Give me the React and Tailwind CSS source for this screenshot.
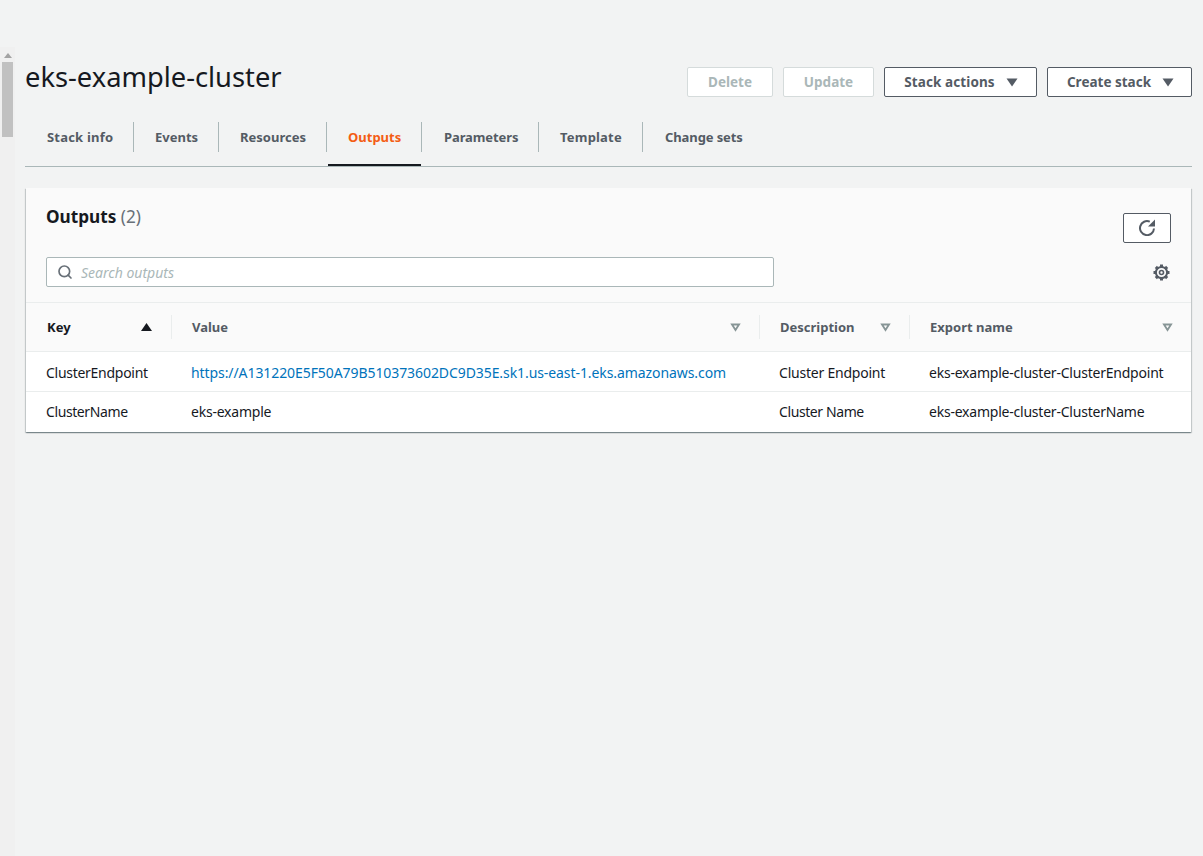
import { Search } from 'lucide-react';

const tabs = [
  { label: 'Stack info', width: 'w-[109px] pl-[22px] tracking-[0.2px]' },
  { label: 'Events', width: 'w-[85px] pl-[21px]' },
  { label: 'Resources', width: 'w-[108px] pl-[21px]' },
  { label: 'Outputs', width: 'w-[95px] pl-[21px]' },
  { label: 'Parameters', width: 'w-[117px] pl-[22px] tracking-[-0.1px]' },
  { label: 'Template', width: 'w-[104px] pl-[21px] tracking-[0.2px]' },
  { label: 'Change sets', width: 'w-[120px] pl-[22px] tracking-[-0.1px]' },
];

const columns = [
  { label: 'Key', width: 'w-[145px] pr-[19px]', sort: true },
  { label: 'Value', width: 'w-[588px] pr-[18px]', filter: true },
  { label: 'Description', width: 'w-[150px] pr-[18px]', filter: true },
  { label: 'Export name', width: 'flex-1 pr-[18px]', filter: true },
];

const rows = [
  {
    key: 'ClusterEndpoint',
    value: 'https://A131220E5F50A79B510373602DC9D35E.sk1.us-east-1.eks.amazonaws.com',
    link: true,
    description: 'Cluster Endpoint',
    exportName: 'eks-example-cluster-ClusterEndpoint',
  },
  {
    key: 'ClusterName',
    value: 'eks-example',
    description: 'Cluster Name',
    exportName: 'eks-example-cluster-ClusterName',
  },
];

const Caret = () => (
  <svg width="12" height="9" viewBox="0 0 12 9" className="ml-[11px]">
    <path d="M0.5 0.5h11L6 8.5z" fill="#545b64" />
  </svg>
);

const FilterCaret = () => (
  <svg width="11" height="9" viewBox="0 0 11 9">
    <path d="M0.3 0.5h10.4L5.5 8.7z M3.7 2.4h3.6L5.5 5.2z" fill="#879596" fillRule="evenodd" />
  </svg>
);

const RefreshIcon = () => (
  <svg width="17" height="17" viewBox="0 0 17 17" fill="none" className="mb-[1px]">
    <path d="M10.8 2.7A7 7 0 1 0 15 9.5" stroke="#545b64" strokeWidth="2" />
    <path d="M16 0.5v7H9z" fill="#545b64" />
  </svg>
);

const GearIcon = () => (
  <svg width="17" height="17" viewBox="0 0 17 17" fill="none" className="mr-[1px]">
    {[0, 45, 90, 135, 180, 225, 270, 315].map((deg) => (
      <rect key={deg} x="7" y="0.5" width="3" height="3" fill="#545b64" transform={`rotate(${deg} 8.5 8.5)`} />
    ))}
    <circle cx="8.5" cy="8.5" r="5.6" stroke="#545b64" strokeWidth="2" />
    <circle cx="8.5" cy="8.5" r="2" stroke="#545b64" strokeWidth="1.6" />
  </svg>
);

const App = () => {
  return (
    <div className="flex min-h-[856px] bg-[#f2f3f3] font-['Noto_Sans',sans-serif] text-[14px] text-[#16191f]">
      {/* Scrollbar */}
      <div className="w-[15px] shrink-0 pt-[47px]">
        <div className="h-[809px] bg-[#f0f0f0] px-[2px]">
          <div className="flex h-[15px] items-center justify-center pt-[1px]">
            <svg width="8" height="5" viewBox="0 0 8 5">
              <path d="M0 5L4 0l4 5z" fill="#a3a3a3" />
            </svg>
          </div>
          <div className="h-[75px] w-[11px] bg-[#c1c1c1]" />
        </div>
      </div>

      <div className="min-w-0 flex-1 pl-[10px] pr-[11px] pt-[57px]">
        {/* Header */}
        <div className="flex h-[40px] items-start justify-between">
          <h1 className="text-[27.3px] leading-[40px] font-normal">eks-example-cluster</h1>
          <div className="mt-[10px] flex gap-[10px] text-[13.5px]">
            <button className="h-[30px] w-[86px] rounded-[2px] border border-[#d5dbdb] bg-white font-bold text-[#aab7b8]">Delete</button>
            <button className="h-[30px] w-[91px] rounded-[2px] border border-[#d5dbdb] bg-white font-bold text-[#aab7b8]">Update</button>
            <button className="flex h-[30px] w-[153px] items-center justify-center rounded-[2px] border border-[#545b64] bg-white pl-[1px] font-bold tracking-[0.1px] text-[#545b64]">
              Stack actions
              <Caret />
            </button>
            <button className="flex h-[30px] w-[145px] items-center justify-center rounded-[2px] border border-[#545b64] bg-white pl-[2px] font-bold text-[#545b64]">
              Create stack
              <Caret />
            </button>
          </div>
        </div>

        {/* Tabs */}
        <div className="mt-[25px] flex h-[45px] border-b border-[#aab7b8]">
          {tabs.map((tab, i) => (
            <div key={tab.label} className={`relative flex h-[44px] items-start pt-[5px] ${tab.width}`}>
              <span className={`text-[13px] leading-[20px] font-bold ${tab.label === 'Outputs' ? 'text-[#f45d14]' : 'text-[#545b64]'}`}>{tab.label}</span>
              {i < tabs.length - 1 && <div className="absolute right-0 top-0 h-[30px] w-px bg-[#aab7b8]" />}
              {tab.label === 'Outputs' && <div className="absolute bottom-0 left-[1px] right-[1px] h-[2px] bg-[#16191f]" />}
            </div>
          ))}
        </div>

        {/* Outputs panel */}
        <div className="mx-[1px] mt-[21px] bg-white shadow-[0_1px_1px_0_rgba(0,28,36,0.3),1px_1px_1px_0_rgba(0,28,36,0.15),-1px_1px_1px_0_rgba(0,28,36,0.15)]">
          <div className="border-b border-[#eaeded] bg-[#fafafa] pb-[15px] pl-[20px] pr-[20px] pt-[18px]">
            <div className="flex items-start justify-between">
              <h2 className="text-[17.2px] leading-[22px] font-bold">
                Outputs <span className="font-normal text-[#687078]">(2)</span>
              </h2>
              <button className="mt-[7px] flex h-[30px] w-[48px] items-center justify-center rounded-[2px] border border-[#545b64] bg-white">
                <RefreshIcon />
              </button>
            </div>
            <div className="mt-[14px] flex items-center justify-between">
              <div className="flex h-[30px] w-[728px] items-center rounded-[2px] border border-[#aab7b8] bg-white pl-[10px]">
                <Search size={16} strokeWidth={2.5} className="text-[#687078]" />
                <span className="ml-[8px] text-[14px] italic text-[#aab7b8]">Search outputs</span>
              </div>
              <GearIcon />
            </div>
          </div>

          <div className="flex h-[49px] items-center border-b border-[#eaeded] bg-[#fafafa]">
            {columns.map((col, i) => (
              <div key={col.label} className={`flex h-[24px] items-center justify-between ${col.width} ${i > 0 ? 'border-l border-[#eaeded] pl-[20px]' : 'pl-[21px]'}`}>
                <span className={`mt-[1px] text-[13px] font-bold ${col.sort ? 'text-[#16191f]' : 'text-[#545b64]'}`}>{col.label}</span>
                {col.sort && (
                  <svg width="11" height="8" viewBox="0 0 11 8">
                    <path d="M0 8L5.5 0 11 8z" fill="#16191f" />
                  </svg>
                )}
                {col.filter && <FilterCaret />}
              </div>
            ))}
          </div>

          {rows.map((row, i) => (
            <div key={row.key} className={`flex h-[40px] items-center leading-[20px] tracking-[-0.22px] ${i === 0 ? 'border-b border-[#eaeded] pt-[3px]' : ''}`}>
              <div className={`w-[145px] pl-[20px] ${i === 1 ? 'tracking-[-0.4px]' : 'tracking-[-0.28px]'}`}>{row.key}</div>
              <div className={`w-[588px] pl-[20px] ${row.link ? 'tracking-[-0.08px] text-[#0073bb]' : ''}`}>{row.value}</div>
              <div className={`w-[150px] pl-[20px] ${i === 1 ? 'tracking-[-0.4px]' : ''}`}>{row.description}</div>
              <div className="flex-1 pl-[20px]">{row.exportName}</div>
            </div>
          ))}
        </div>
      </div>
    </div>
  );
};

export default App;
